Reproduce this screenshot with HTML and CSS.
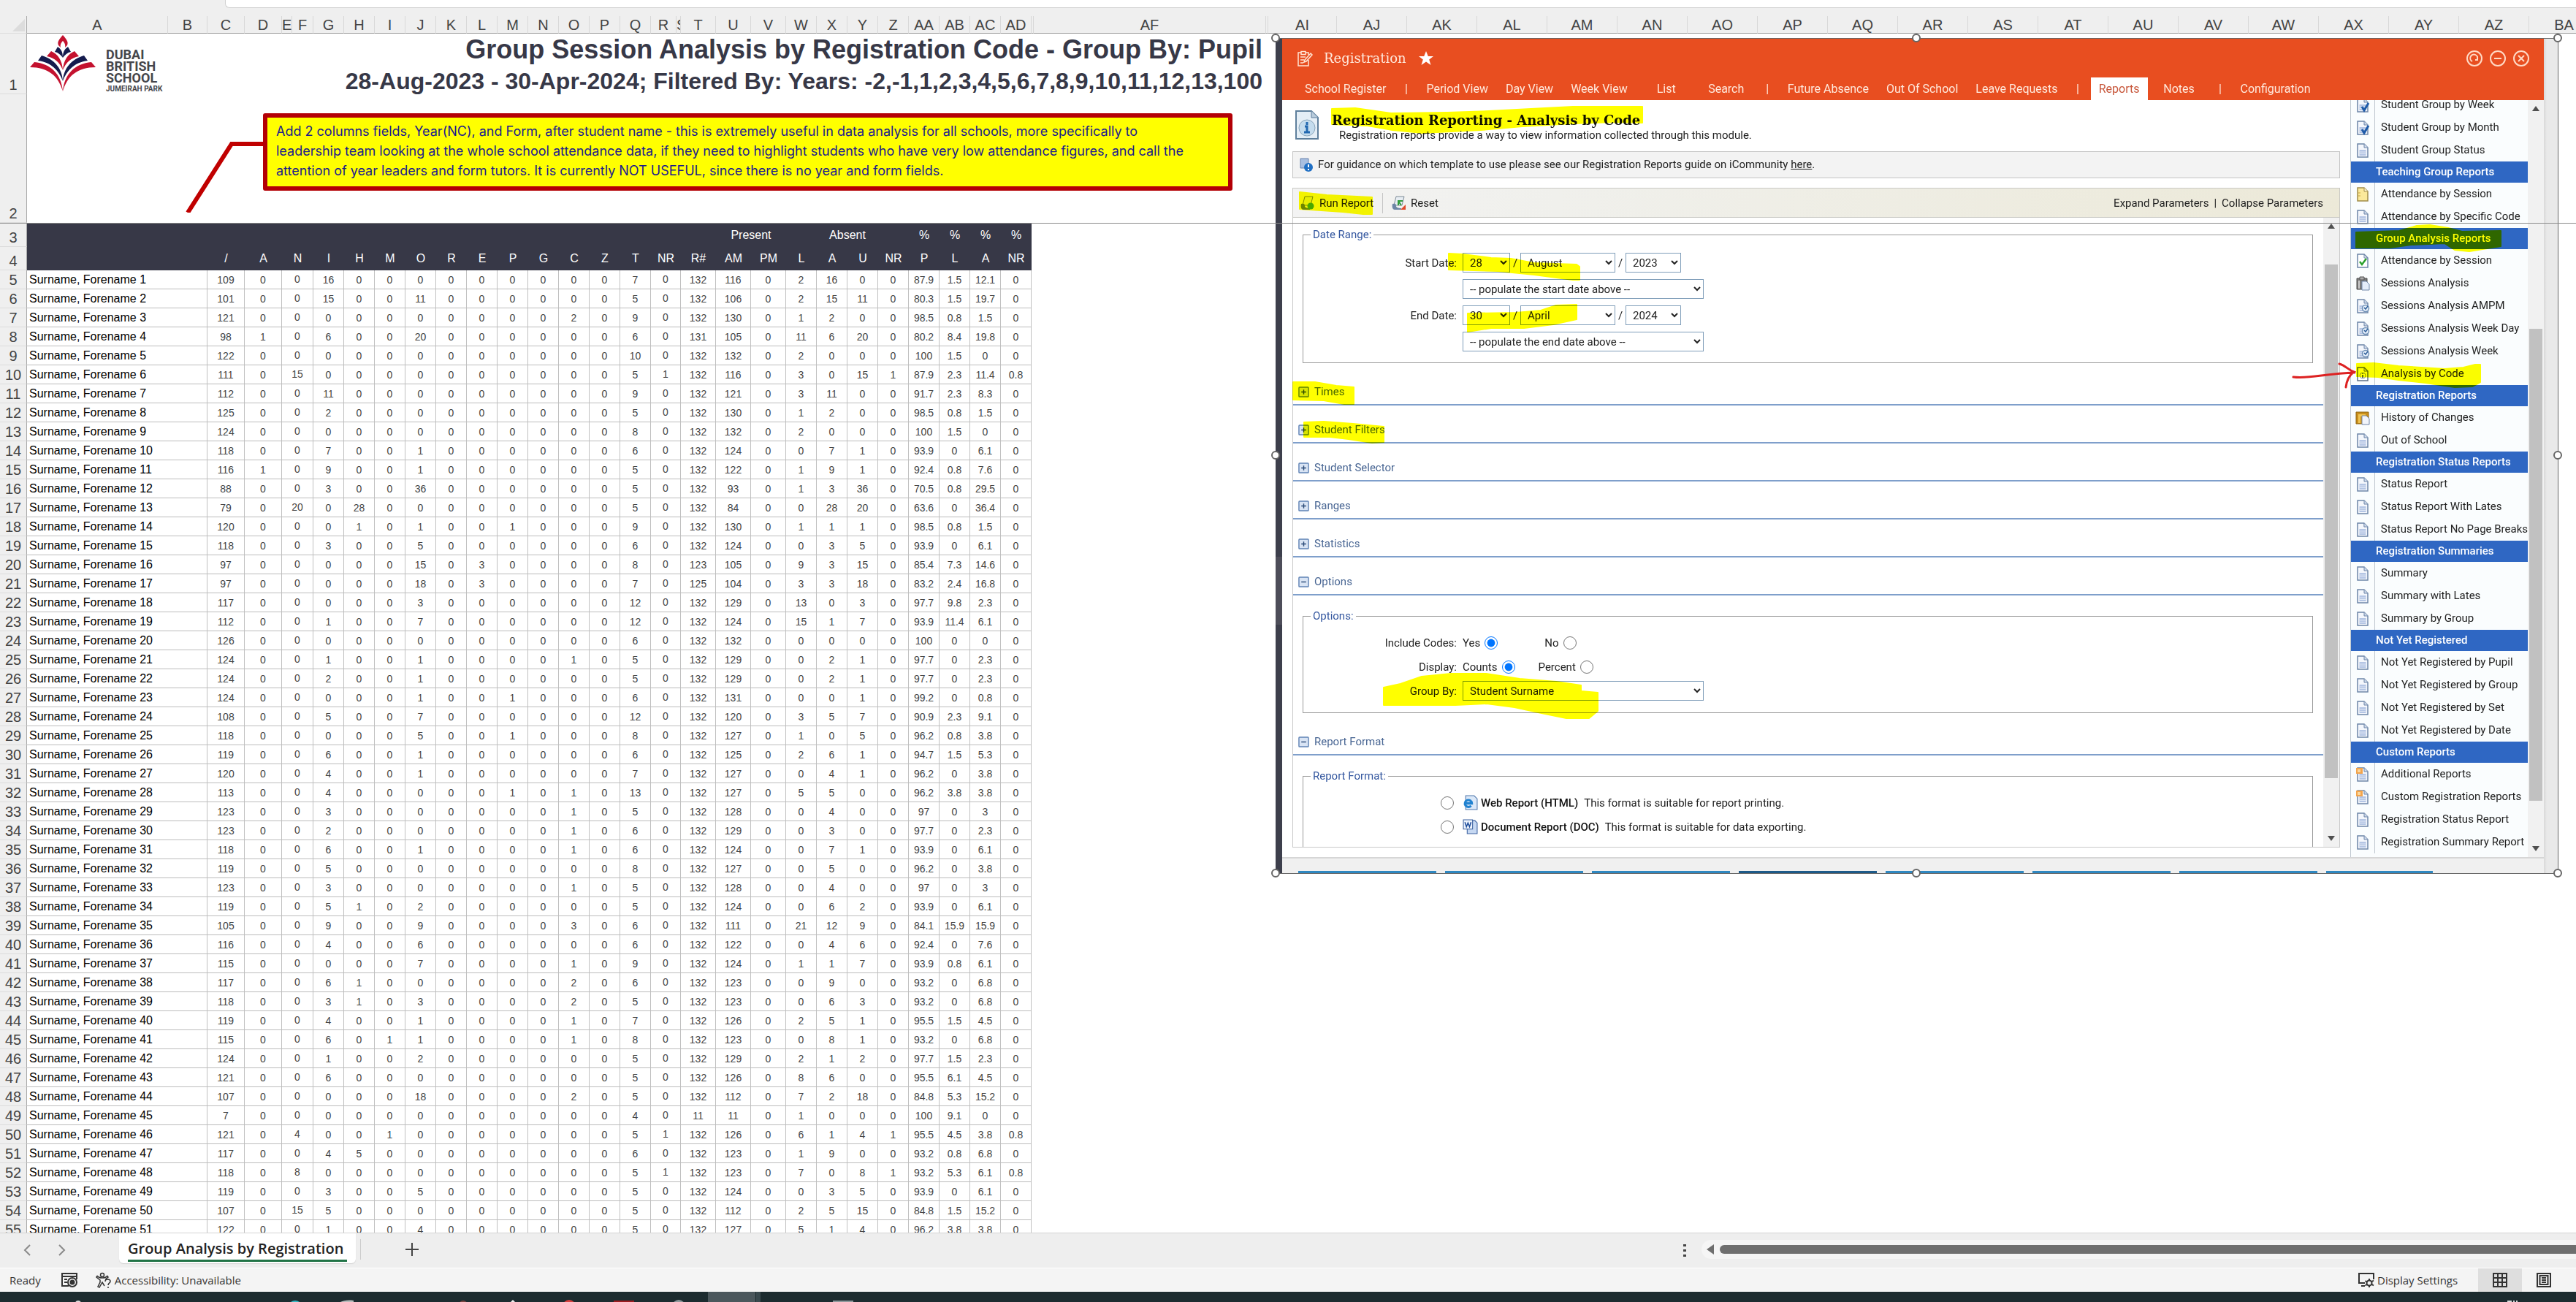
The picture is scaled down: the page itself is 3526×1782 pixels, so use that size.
FILE: index.html
```html
<!DOCTYPE html>
<html lang="en">
<head>
<meta charset="utf-8">
<title>Group Analysis by Registration</title>
<link rel="stylesheet" href="styles.css">
</head>
<body>
<svg class="symbols" aria-hidden="true">
  <symbol id="doc" viewBox="0 0 20 20"><path d="M3 1h9l5 5v13H3z" fill="#f4f7fc" stroke="#6e86a8" stroke-width="1.5"/><path d="M12 1v5h5" fill="#cfdbec" stroke="#6e86a8"/><path d="M5.500 9h9v8h-9z" fill="#b4c5e4"/><path d="M5.500 12h9M5.500 14.500h9" stroke="#dfe7f4"/></symbol>
  <symbol id="doc-check" viewBox="0 0 20 20"><use href="#doc"/><path d="M9 12l3 5 6-10" fill="none" stroke="#1f5ba8" stroke-width="3"/></symbol>
  <symbol id="doc-note" viewBox="0 0 20 20"><path d="M3 1h9l5 5v13H3z" fill="#fbe99b" stroke="#a08c4a" stroke-width="1.500"/><path d="M12 1v5h5" fill="#fff6cf" stroke="#a08c4a"/><path d="M4 8h3M4 12h3" stroke="#c9a43b"/></symbol>
  <symbol id="doc-tick" viewBox="0 0 20 20"><path d="M3 1h9l5 5v13H3z" fill="#fff" stroke="#6e86a8" stroke-width="1.500"/><path d="M12 1v5h5" fill="none" stroke="#6e86a8"/><path d="M6 11l3 4 6-8" fill="none" stroke="#2ba02b" stroke-width="2.500"/></symbol>
  <symbol id="clip" viewBox="0 0 20 20"><path d="M2 3h14v15H2z" fill="#7b7b7b" stroke="#4c4c4c"/><path d="M6 1h6v4H6z" fill="#aaa" stroke="#555"/><path d="M5 6v11" stroke="#ccc" stroke-width="2"/><path d="M9 7h6l4 4v8H9z" fill="#e4edfa" stroke="#6e86a8"/></symbol>
  <symbol id="doc-clock" viewBox="0 0 20 20"><use href="#doc"/><circle cx="14" cy="13" r="4.500" fill="#e8f1fb" stroke="#6d8fb5" stroke-width="1.500"/><path d="M12 12l2 2 3-4" fill="none" stroke="#2f5f9a" stroke-width="1.500"/></symbol>
  <symbol id="doc-info" viewBox="0 0 20 20"><path d="M3 1h9l5 5v13H3z" fill="#fff" stroke="#5c6f86" stroke-width="1.500"/><path d="M12 1v5h5" fill="none" stroke="#5c6f86"/><circle cx="10" cy="12" r="4" fill="none" stroke="#8a97a8"/><path d="M10 9v1M10 11v4" stroke="#5c6f86" stroke-width="2"/></symbol>
  <symbol id="book" viewBox="0 0 20 20"><path d="M1 2h17v16H1z" fill="#c98f1c" stroke="#8d6210"/><path d="M4 5h10v3H7v9H4z" fill="#f0c453"/><path d="M9 7h6l4 4v8H9z" fill="#f2f5fb" stroke="#7386a5"/></symbol>
  <symbol id="doc-new" viewBox="0 0 20 20"><use href="#doc"/><path d="M1 1h9v8H1z" fill="#f3a44c"/><path d="M3 3h4v4H3z" fill="#fbd79c"/></symbol>
  <symbol id="run" viewBox="0 0 20 20"><path d="M6 1h11l-3 12H3z" fill="#e7edf3" stroke="#7d8a96"/><path d="M1 11c4-1 5 0 5 3 0 2 3 3 7 3v2H4c-3 0-4-4-3-8z" fill="#6d86a5"/><circle cx="14" cy="14" r="4.500" fill="#49a82e"/></symbol>
  <symbol id="reset" viewBox="0 0 20 20"><path d="M6 1h11l-3 12H3z" fill="#e7edf3" stroke="#7d8a96"/><path d="M1 11c4-1 5 0 5 3 0 2 3 3 7 3v2H4c-3 0-4-4-3-8z" fill="#6d86a5"/><path d="M9 13V7h6M9 7l4 6" stroke="#2f9c3a" stroke-width="2" fill="none"/><path d="M19 12v7h-7z" fill="#e04a2a"/></symbol>
  <symbol id="plus" viewBox="0 0 16 16"><rect x="1" y="1" width="14" height="14" rx="1" fill="#d9e4f4" stroke="#5f83b5" stroke-width="1.500"/><path d="M4.500 8h7M8 4.500v7" stroke="#2b4a78" stroke-width="1.500"/></symbol>
  <symbol id="minus" viewBox="0 0 16 16"><rect x="1" y="1" width="14" height="14" rx="1" fill="#d9e4f4" stroke="#5f83b5" stroke-width="1.500"/><path d="M4.500 8h7" stroke="#2b4a78" stroke-width="1.500"/></symbol>
</svg>

<div class="window">
  <div class="formula-strip"><div class="formula-box"></div></div>

  <main class="sheet">
    <table class="grid" id="grid">
      <colgroup id="cols"></colgroup>
      <thead>
        <tr class="letters" id="letters"></tr>
      </thead>
      <tbody id="rows">
        <tr class="row-one">
          <th class="rownum" scope="row">1</th>
          <td colspan="2" class="logo-cell">
            <div class="logo">
              <svg class="logo-mark" viewBox="0 0 90 78" aria-hidden="true">
                <path d="M45 0c5 6 8 9 6 14l-3 3c1-4-1-7-3-9-2 2-4 5-3 9l-3-3c-2-5 1-8 6-14z" fill="#c4122f"/>
                <g id="fan">
                  <path d="M34 23l4-7c4 3 7 6 7 15-3-4-6-7-11-8z" fill="#141b4d"/>
                  <path d="M23 29l6-7c9 4 15 12 16 26-4-10-11-17-22-19z" fill="#c4122f"/>
                  <path d="M11 35l5-7c17 5 28 17 29 35-5-14-16-26-34-28z" fill="#141b4d"/>
                  <path d="M0 44l6-7c22 2 37 16 39 40-6-21-20-33-45-33z" fill="#c4122f"/>
                </g>
                <use href="#fan" transform="matrix(-1 0 0 1 90 0)"/>
              </svg>
              <div class="logo-text">DUBAI<br>BRITISH<br>SCHOOL<small>JUMEIRAH PARK</small></div>
            </div>
          </td>
          <td colspan="30" class="title-cell">
            <div class="title">Group Session Analysis by Registration Code - Group By: Pupil</div>
            <div class="subtitle">28-Aug-2023 - 30-Apr-2024; Filtered By: Years: -2,-1,1,2,3,4,5,6,7,8,9,10,11,12,13,100</div>
          </td>
        </tr>
        <tr class="row-two"><th class="rownum" scope="row">2</th></tr>
        <tr class="band row-three">
          <th class="rownum" scope="row">3</th>
          <td colspan="20"></td><td colspan="2">Present</td><td></td><td colspan="2">Absent</td><td></td>
          <td>%</td><td>%</td><td>%</td><td>%</td>
        </tr>
        <tr class="band row-four" id="codes"><th class="rownum" scope="row">4</th></tr>
      </tbody>
    </table>

    <svg class="leader" viewBox="0 0 110 100" aria-hidden="true"><path d="M6 96L66 2h44" transform="translate(0 4)" fill="none" stroke="#c00000" stroke-width="6"/></svg>
    <p class="callout">Add 2 columns fields, Year(NC), and Form, after student name - this is extremely useful in data analysis for all schools, more specifically to<br>leadership team looking at the whole school attendance data, if they need to highlight students who have very low attendance figures, and call the<br>attention of year leaders and form tutors. It is currently NOT USEFUL, since there is no year and form fields.</p>

    <section class="picture">
      <div class="edge-left"></div>
      <div class="app">
        <header class="app-head">
          <div class="app-title">
            <svg class="pad-icon" viewBox="0 0 24 24" fill="none" stroke="#ffe6d5" stroke-width="1.500"><path d="M17 14v8H3V4h4M13 4h4v3"/><path d="M7 2.500h6v4H7zM6 10h7M6 14h5M6 18h4"/><path d="M20 5l2 2-8 9-3 1 1-3z"/></svg>
            <h1>Registration</h1>
            <svg class="star" viewBox="0 0 20 20"><path d="M10 0l2.800 7H20l-5.800 4.500L16.500 19 10 14.500 3.500 19l2.300-7.500L0 7h7.200z" fill="#fff"/></svg>
            <div class="win-buttons">
              <button aria-label="Refresh"><svg viewBox="0 0 22 22"><circle cx="11" cy="11" r="10"/><path d="M8 15a5 5 0 1 1 7-3M15 8v5h-3"/></svg></button>
              <button aria-label="Minimise"><svg viewBox="0 0 22 22"><circle cx="11" cy="11" r="10"/><path d="M6 11h10"/></svg></button>
              <button aria-label="Close"><svg viewBox="0 0 22 22"><circle cx="11" cy="11" r="10"/><path d="M7 7l8 8M15 7l-8 8"/></svg></button>
            </div>
          </div>
          <nav class="tabs">
            <a href="#">School Register</a><span>|</span><a href="#">Period View</a><a href="#">Day View</a><a href="#">Week View</a><a href="#">List</a><a href="#">Search</a><span>|</span><a href="#">Future Absence</a><a href="#">Out Of School</a><a href="#">Leave Requests</a><span>|</span><a href="#" class="current">Reports</a><a href="#">Notes</a><span>|</span><a href="#">Configuration</a>
          </nav>
        </header>

        <div class="app-body">
          <div class="content">
            <div class="page-head">
              <svg class="info-icon" viewBox="0 0 32 40"><path d="M1 1h21l9 9v29H1z" fill="#e4eef6" stroke="#5e7f9c" stroke-width="2"/><path d="M22 1v9h9" fill="#b8cbdb" stroke="#5e7f9c"/><circle cx="16" cy="24" r="11" fill="#c4dcee" stroke="#8aa5ba"/><path d="M16 16v4M13 22h3v8M12 30h8" stroke="#2268b0" stroke-width="3" fill="none"/></svg>
              <div>
                <h2>Registration Reporting - Analysis by Code</h2>
                <p>Registration reports provide a way to view information collected through this module.</p>
              </div>
            </div>
            <div class="guidance">
              <svg class="icon" viewBox="0 0 20 20"><path d="M2 1h11v13H2z" fill="#a9bfe0" stroke="#6983ad"/><circle cx="13" cy="13" r="6" fill="#1f6fc4"/><path d="M13 9v4M13 15v2" stroke="#fff" stroke-width="2"/></svg>
              <span>For guidance on which template to use please see our Registration Reports guide on iCommunity <a href="#">here</a>.</span>
            </div>
            <div class="toolbar">
              <button><svg class="icon"><use href="#run"/></svg>Run Report</button>
              <i class="divider"></i>
              <button><svg class="icon"><use href="#reset"/></svg>Reset</button>
              <div class="toolbar-right"><a href="#">Expand Parameters</a><span>|</span><a href="#">Collapse Parameters</a></div>
            </div>
            <div class="params">
              <form class="form">
                <fieldset>
                  <legend>Date Range:</legend>
                  <div class="field"><label for="sd">Start Date:</label><select id="sd" class="w-day"><option>28</option></select><b>/</b><select aria-label="Start month" class="w-month"><option>August</option></select><b>/</b><select aria-label="Start year" class="w-year"><option>2023</option></select></div>
                  <div class="field"><label for="sp"></label><select id="sp" aria-label="Populate start" class="w-full"><option>-- populate the start date above --</option></select></div>
                  <div class="field"><label for="ed">End Date:</label><select id="ed" class="w-day"><option>30</option></select><b>/</b><select aria-label="End month" class="w-month"><option>April</option></select><b>/</b><select aria-label="End year" class="w-year"><option>2024</option></select></div>
                  <div class="field"><label for="ep"></label><select id="ep" aria-label="Populate end" class="w-full"><option>-- populate the end date above --</option></select></div>
                </fieldset>
                <div class="fold first"><svg><use href="#plus"/></svg>Times</div>
                <div class="fold"><svg><use href="#plus"/></svg>Student Filters</div>
                <div class="fold"><svg><use href="#plus"/></svg>Student Selector</div>
                <div class="fold"><svg><use href="#plus"/></svg>Ranges</div>
                <div class="fold"><svg><use href="#plus"/></svg>Statistics</div>
                <div class="fold"><svg><use href="#minus"/></svg>Options</div>
                <fieldset class="compact">
                  <legend>Options:</legend>
                  <div class="field"><span class="lead">Include Codes:</span><label class="choice">Yes<input type="radio" name="codes" checked></label><label class="choice second-a">No<input type="radio" name="codes"></label></div>
                  <div class="field"><span class="lead">Display:</span><label class="choice">Counts<input type="radio" name="display" checked></label><label class="choice second-b">Percent<input type="radio" name="display"></label></div>
                  <div class="field"><label for="gb">Group By:</label><select id="gb" class="w-full"><option>Student Surname</option></select></div>
                </fieldset>
                <div class="fold first"><svg><use href="#minus"/></svg>Report Format</div>
                <fieldset class="compact">
                  <legend>Report Format:</legend>
                  <div class="field format"><input type="radio" name="format" id="f1"><svg viewBox="0 0 20 20"><path d="M4 1h11l4 4v14H4z" fill="#dbe8f8" stroke="#4f76ac"/><path d="M3 11h9a4.500 4.500 0 1 0-1 3" fill="none" stroke="#2182d0" stroke-width="3"/></svg><label for="f1">Web Report (HTML)</label><span>This format is suitable for report printing.</span></div>
                  <div class="field format"><input type="radio" name="format" id="f2"><svg viewBox="0 0 20 20"><path d="M6 2h10l3 3v14H6z" fill="#c6d8f2" stroke="#3c62a0"/><path d="M1 1h12v12H1z" fill="#eef4fd" stroke="#3c62a0"/><path d="M3 4l2 6 2-5 2 5 2-6" fill="none" stroke="#1f4d9b" stroke-width="1.500"/></svg><label for="f2">Document Report (DOC)</label><span>This format is suitable for data exporting.</span></div>
                </fieldset>
              </form>
              <div class="scroll"><i class="up"></i><i class="thumb thumb-form"></i><i class="down"></i></div>
            </div>
          </div>

          <aside class="side">
            <ul>
              <li><svg><use href="#doc-check"/></svg><a href="#">Student Group by Week</a></li>
              <li><svg><use href="#doc-check"/></svg><a href="#">Student Group by Month</a></li>
              <li><svg><use href="#doc"/></svg><a href="#">Student Group Status</a></li>
              <li class="group">Teaching Group Reports</li>
              <li><svg><use href="#doc-note"/></svg><a href="#">Attendance by Session</a></li>
              <li><svg><use href="#doc"/></svg><a href="#">Attendance by Specific Code</a></li>
              <li class="group">Group Analysis Reports</li>
              <li><svg><use href="#doc-tick"/></svg><a href="#">Attendance by Session</a></li>
              <li><svg><use href="#clip"/></svg><a href="#">Sessions Analysis</a></li>
              <li><svg><use href="#doc-clock"/></svg><a href="#">Sessions Analysis AMPM</a></li>
              <li><svg><use href="#doc-clock"/></svg><a href="#">Sessions Analysis Week Day</a></li>
              <li><svg><use href="#doc-clock"/></svg><a href="#">Sessions Analysis Week</a></li>
              <li><svg><use href="#doc-info"/></svg><a href="#">Analysis by Code</a></li>
              <li class="group">Registration Reports</li>
              <li><svg><use href="#book"/></svg><a href="#">History of Changes</a></li>
              <li><svg><use href="#doc"/></svg><a href="#">Out of School</a></li>
              <li class="group">Registration Status Reports</li>
              <li><svg><use href="#doc"/></svg><a href="#">Status Report</a></li>
              <li><svg><use href="#doc"/></svg><a href="#">Status Report With Lates</a></li>
              <li><svg><use href="#doc"/></svg><a href="#">Status Report No Page Breaks</a></li>
              <li class="group">Registration Summaries</li>
              <li><svg><use href="#doc"/></svg><a href="#">Summary</a></li>
              <li><svg><use href="#doc"/></svg><a href="#">Summary with Lates</a></li>
              <li><svg><use href="#doc"/></svg><a href="#">Summary by Group</a></li>
              <li class="group">Not Yet Registered</li>
              <li><svg><use href="#doc"/></svg><a href="#">Not Yet Registered by Pupil</a></li>
              <li><svg><use href="#doc"/></svg><a href="#">Not Yet Registered by Group</a></li>
              <li><svg><use href="#doc"/></svg><a href="#">Not Yet Registered by Set</a></li>
              <li><svg><use href="#doc"/></svg><a href="#">Not Yet Registered by Date</a></li>
              <li class="group">Custom Reports</li>
              <li><svg><use href="#doc-new"/></svg><a href="#">Additional Reports</a></li>
              <li><svg><use href="#doc-new"/></svg><a href="#">Custom Registration Reports</a></li>
              <li><svg><use href="#doc"/></svg><a href="#">Registration Status Report</a></li>
              <li><svg><use href="#doc"/></svg><a href="#">Registration Summary Report</a></li>
            </ul>
            <div class="scroll"><i class="up"></i><i class="thumb thumb-side"></i><i class="down"></i></div>
          </aside>
        </div>
        <footer class="app-foot"><i></i><i></i><i></i><i class="dark"></i><i></i><i></i><i></i><i class="cut"></i></footer>
      </div>
      <div class="edge-right"></div>

      <svg class="marker" viewBox="1746 52 1755 1143" aria-hidden="true" fill="#ff0" stroke="#ff0" stroke-width="2" stroke-linejoin="round">
        <path d="M1823 149L1855 148 1904 155 1981 154 2038 152 2153 146 2248 146V168L2211 167 2153 169 2084 173 2027 178 1947 182 1906 178 1872 172 1823 170z"/>
        <path d="M1779 263L1816 267 1878 270V293L1866 293 1838 290 1779 286z"/>
        <path d="M1983 347L2002 348 2041 353 2068 354 2100 360 2158 362 2162 365V383L2153 383 2100 376 2050 371 1983 369z"/>
        <path d="M2009 429L2075 428 2109 425 2130 418 2158 417V437L2126 444 2086 449 2041 449 2009 454z"/>
        <path d="M1770 523L1800 523 1829 528 1853 530V553L1840 553 1812 548 1770 547z"/>
        <path d="M1785 578L1812 577 1852 580 1894 584V605L1878 606 1846 601 1820 598 1785 598z"/>
        <path d="M1894 941L1917 936 1946 926 1986 922 2034 922 2080 929 2130 933 2164 938V946L2187 948V973L2175 983 2144 983 2110 976 2073 968 2035 963 1992 965 1894 965z"/>
        <path d="M3225 318L3284 316 3308 309 3326 308 3351 312 3370 317 3423 316V337L3392 342 3380 344 3360 342 3346 333 3300 335 3272 339 3225 339z"/>
        <path d="M3226 498L3249 497 3283 501 3346 505 3372 503 3388 499 3395 499V523L3384 529 3360 530 3320 524 3283 520 3255 516 3226 515z"/>
      </svg>
      <svg class="handles" viewBox="1740 46 1767 1155" aria-hidden="true">
        <path d="M3139 516c22 3 44-5 84-6M3202 498c8 2 12 8 20 11-7 5-10 12-11 21" fill="none" stroke="#d22" stroke-width="3" stroke-linecap="round"/>
        <path d="M1746 52.500H3501.500V1195.500H1746" fill="none" stroke="#666"/>
        <g fill="#fff" stroke="#666" stroke-width="2"><circle cx="1746" cy="52" r="5"/><circle cx="2623" cy="52" r="5"/><circle cx="3501" cy="52" r="5"/><circle cx="1746" cy="623" r="5"/><circle cx="3501" cy="623" r="5"/><circle cx="1746" cy="1195" r="5"/><circle cx="2623" cy="1195" r="5"/><circle cx="3501" cy="1195" r="5"/></g>
      </svg>
    </section>
    <div class="freeze"></div>
  </main>

  <div class="sheet-bar">
    <button class="step" aria-label="Previous sheet"><svg viewBox="0 0 10 16"><path d="M9 1L2 8l7 7"/></svg></button>
    <button class="step" aria-label="Next sheet"><svg viewBox="0 0 10 16"><path d="M1 1l7 7-7 7"/></svg></button>
    <button class="sheet-tab"><span>Group Analysis by Registration</span></button>
    <i class="tab-split"></i>
    <button class="add" aria-label="New sheet"><svg viewBox="0 0 18 18"><path d="M9 0v18M0 9h18"/></svg></button>
    <div class="hscroll-area">
      <svg class="dots" viewBox="0 0 4 18"><path d="M0 0h4v3H0zM0 7h4v3H0zM0 14h4v3H0z" fill="#444"/></svg>
      <div class="hscroll"><svg viewBox="0 0 10 14"><path d="M10 0v14L0 7z" fill="#6f6f6f"/></svg><i></i></div>
    </div>
  </div>

  <footer class="status">
    <span>Ready</span>
    <svg class="rec" viewBox="0 0 22 20" fill="none" stroke="#333" stroke-width="2"><path d="M10 18H1V1h20v8M1 5h20M4 9h4M4 13h4"/><circle cx="15" cy="13" r="6" fill="#f4f4f4"/><circle cx="15" cy="13" r="2.500" fill="#333"/></svg>
    <svg class="acc" viewBox="0 0 22 22" fill="none" stroke="#333" stroke-width="1.500"><circle cx="9" cy="4" r="2.500"/><path d="M2 5c2 3 5 3 7 3s5 0 7-3M2 5l-1 2 5 4v3l-3 6 2 1 4-7 3 5M16 5l1 2-4 3M13 13c0-4 7-4 7 0 0 2-3 2-3 5M17 20v2"/></svg>
    <span>Accessibility: Unavailable</span>
    <div class="status-right">
      <svg class="rec" viewBox="0 0 22 20" fill="none" stroke="#333" stroke-width="2"><path d="M9 14H1V1h20v8M4 18h5"/><circle cx="15" cy="14" r="3.500"/><path d="M15 8v3M15 17v3M9.500 11l3 2M18 15.500l3 2M9.500 17.500l3-2M18 12.500l3-2"/></svg>
      <span>Display Settings</span>
      <button class="view on" aria-label="Normal view"><svg viewBox="0 0 20 20"><path d="M1 1h18v18H1zM1 7h18M1 13h18M7 1v18M13 1v18"/></svg></button>
      <button class="view" aria-label="Page layout view"><svg viewBox="0 0 20 20"><path d="M1 1h18v18H1zM4.500 4h11v12h-11zM7 7h6M7 10h6M7 13h6"/></svg></button>
    </div>
  </footer>

  <svg class="taskbar" viewBox="0 0 3526 14" preserveAspectRatio="xMinYMin slice" aria-hidden="true">
    <path d="M0 0h3526v14H0z" fill="#1c2b2f"/><path d="M969 0h65v14h-65z" fill="#4b575c"/><path d="M1035 0h6v14h-6z" fill="#39484d"/>
    <circle cx="404" cy="22" r="10" fill="#35b8c4"/><circle cx="107" cy="16" r="4" fill="#ddd"/><path d="M466 14c4-2 10-3 18-2v2z" fill="#b8bcbc"/><circle cx="634" cy="18" r="6" fill="#7a4440"/><path d="M699 14l3-3 3 3z" fill="#eee"/><circle cx="779" cy="20" r="9" fill="#d8413f"/><path d="M840 12h28v2h-28z" fill="#9b1c20"/><circle cx="929" cy="20" r="9" fill="#8f999c"/><path d="M1140 12h28v2h-28z" fill="#8f999c"/><path d="M3432 12h6v2h-6zM3440 12h2v2h-2zM3444 12h2v2h-2z" fill="#d8dcdc"/>
  </svg>
</div>
<script src="script.js"></script>
</body>
</html>
```
FILE: styles.css
```css
* { box-sizing: border-box; }
body { margin: 0; font-family: "Liberation Sans", Arial, sans-serif; background: #efefef; }
button { border: 0; background: none; padding: 0; margin: 0; font: inherit; color: inherit; }
.symbols { position: absolute; width: 0; height: 0; }
.window { display: flex; flex-direction: column; height: 100vh; overflow: hidden; }

.formula-strip { flex: 0 0 22px; background: #efefef; }
.formula-box { height: 11px; margin-left: 308px; background: #fff; border: 1px solid #d0d0d0; border-width: 0 0 1px 1px; border-bottom-left-radius: 6px; }

/* spreadsheet */
.sheet { position: relative; flex: 1; min-height: 0; overflow: hidden; background: #fff; }
.grid { table-layout: fixed; width: 100%; border-spacing: 0; border-collapse: separate; }
.grid th, .grid td { padding: 0; font-weight: normal; white-space: nowrap; }
.letters { height: 24px; }
.letters th { background: #efefef; border-bottom: 1px solid #999; border-right: 1px solid #d8d8d8; font-size: 20px; line-height: 22px; color: #444; overflow: hidden; }
.corner svg { display: block; width: 17px; height: 17px; margin: 2px 2px 2px auto; }
.grid .rownum { background: #efefef; border-right: 1px solid #a8a8a8; border-bottom: 1px solid #dcdcdc; font-size: 20px; line-height: 23px; color: #444; vertical-align: bottom; text-align: center; }
.row-one { height: 83px; }
.row-two { height: 176px; }
.row-three { height: 33px; }
.row-four { height: 32px; }
.grid .logo-cell, .grid .title-cell { vertical-align: top; }
.logo { display: flex; gap: 14px; padding: 2px 0 0 4px; height: 83px; }
.logo-mark { width: 90px; height: 78px; }
.logo-text { padding-top: 19px; font: 700 18px/16px Roboto, sans-serif; color: #46464b; }
.logo-text small { display: block; font-size: 10px; line-height: 14px; }
.grid .title-cell { padding-right: 5px; font-weight: bold; text-align: right; color: #373847; }
.title { font-size: 36px; line-height: 44px; }
.subtitle { margin-top: 3px; font-size: 32px; line-height: 36px; }
.band td { background: #373847; color: #fff; font-size: 16px; text-align: center; }
.data { height: 26px; }
.data td { border-right: 1px solid #c0c0c0; border-bottom: 1px solid #bcbcbc; font-size: 14px; line-height: 16px; text-align: center; color: #444; }
.data td.name { padding-left: 3px; text-align: left; font-size: 16px; color: #000; }
.data td.merged { padding-bottom: 2px; }

.freeze { position: absolute; left: 0; right: 0; top: 283px; height: 1px; background: #8a8a8a; }
.leader { position: absolute; left: 251px; top: 169px; width: 110px; height: 100px; }
.callout { position: absolute; left: 360px; top: 133px; width: 1327px; height: 106px; margin: 0; padding: 5px 12px; background: #ff0; border: 6px solid #b30006; border-radius: 3px; font: 18px/27px Inter, sans-serif; color: #1b1b8c; white-space: nowrap; }

/* embedded picture */
.picture { position: absolute; left: 1746px; top: 30px; width: 1755px; height: 1143px; display: flex; isolation: isolate; font-family: Roboto, sans-serif; font-size: 15px; line-height: 20px; color: #222; background: #fff; }
.edge-left { flex: 0 0 9px; background: linear-gradient(#3d3f4c 710px, #4d4d59 710px, #4d4d59 803px, #3d3f4c 803px); }
.edge-right { flex: 0 0 19px; background: linear-gradient(90deg, #d8d8d8, #e9e9e9 4px); }
.app { flex: 1; min-width: 0; display: flex; flex-direction: column; }
.app-head { flex: 0 0 85px; display: flex; flex-direction: column; justify-content: space-between; background: #e84e20; color: #ffe9dc; }
.app-title { display: flex; align-items: center; padding: 14px 20px 0 19px; height: 41px; }
.app-title h1 { margin: 0 17px 0 14px; font: 18px/24px "DejaVu Serif", serif; }
.pad-icon { width: 24px; height: 24px; }
.star { width: 20px; height: 20px; }
.win-buttons { margin-left: auto; display: flex; gap: 10px; }
.win-buttons svg { display: block; width: 22px; height: 22px; fill: none; stroke: #ffd9c4; stroke-width: 2; }
.tabs { display: flex; padding-left: 19px; font-size: 16px; line-height: 31px; }
.tabs a { min-width: 82px; padding: 0 12px; text-align: center; color: #ffe9dc; text-decoration: none; }
.tabs span { flex: 0 0 31px; text-align: center; }
.tabs .current { min-width: 78px; margin: 0 2px; padding: 0 11px; background: #fff; color: #c8583c; }
.app-body { flex: 1; min-height: 0; display: flex; }
.content { flex: 1; min-width: 0; padding: 0 14px 13px; display: flex; flex-direction: column; }
.page-head { flex: 0 0 70px; display: flex; gap: 18px; padding: 14px 0 0 4px; }
.page-head h2 { margin: 0; font: 700 18px/28px "DejaVu Serif", serif; color: #111; }
.page-head p { margin: 0; padding-left: 10px; line-height: 12px; }
.info-icon { width: 32px; height: 40px; }
.guidance { flex: 0 0 37px; display: flex; align-items: center; gap: 6px; padding-left: 8px; border: 1px solid #c4c4c4; background: #f3f3f3; margin-bottom: 13px; }
.guidance span { padding-bottom: 2px; }
.icon { width: 20px; height: 20px; }
a { color: inherit; }
.toolbar { flex: 0 0 41px; display: flex; align-items: center; padding: 0 22px 0 10px; border: 1px solid #c9c9c4; background: linear-gradient(90deg, #f3f3f3, #f0f0ec 25%, #ece9d8); }
.toolbar button { display: flex; align-items: center; gap: 6px; }
.toolbar .divider { width: 1px; height: 28px; margin: 0 12px; background: #c4c4c4; }
.toolbar-right { margin-left: auto; display: flex; gap: 7px; }
.toolbar-right a { text-decoration: none; }
.params { flex: 1; min-height: 0; overflow: hidden; display: flex; border: 1px solid #c9c9c9; border-top: 0; }
.form { flex: 1; min-width: 0; }
fieldset { margin: 13px 14px 0 13px; padding: 15px 0; border: 1px solid #999; display: grid; gap: 9px; min-width: 0; }
fieldset.compact { margin-top: 18px; padding: 13px 0 16px; gap: 6px; }
legend { margin-left: 10px; padding: 0 3px; color: #34579f; }
.field { display: flex; align-items: center; height: 27px; }
.field > label:first-child, .lead { width: 210px; margin-right: 8px; text-align: right; }
.field b { width: 14px; text-align: center; font-weight: normal; }
select { height: 27px; padding: 0 5px; border: 1px solid #7f9db9; border-radius: 0; background: #fff; font: 15px Roboto, sans-serif; color: #222; }
.w-day { width: 65px; }
.w-month { width: 130px; }
.w-year { width: 76px; }
.w-full { width: 330px; }
.choice { display: flex; align-items: center; gap: 6px; }
input[type=radio] { width: 18px; height: 18px; margin: 0; }
.second-a { margin-left: 64px; }
.second-b { margin-left: 32px; }
.format input { margin-left: 188px; }
.format svg { width: 21px; height: 21px; margin: 0 4px 0 12px; }
.format label { font-weight: 500; color: #111; }
.format span { margin-left: 8px; }
.fold { display: flex; align-items: flex-end; gap: 7px; height: 52px; padding: 0 0 7px 7px; border-bottom: 2px solid #7f9fcb; color: #4a6794; }
.fold.first { margin-top: 6px; }
.fold svg { width: 15px; height: 15px; margin-bottom: 2px; }

.scroll { flex: 0 0 22px; display: flex; flex-direction: column; align-items: center; background: #f1f1f1; }
.up, .down { flex: none; width: 0; border: 5px solid transparent; }
.up { margin-top: 3px; border-bottom: 7px solid #505050; }
.down { margin-top: auto; margin-bottom: 8px; border-top: 7px solid #505050; border-bottom: 0; }
.thumb { width: 18px; background: #c1c1c1; }
.thumb-form { margin-top: 49px; height: 703px; }
.thumb-side { margin-top: 298px; height: 646px; }

.side { flex: 0 0 265px; display: flex; overflow: hidden; border-left: 1px solid #c0c8d0; }
.side ul { flex: 1; min-width: 0; list-style: none; margin: -9px 0 0; padding: 0; background: #fafdfe; }
.side li { display: flex; align-items: center; height: 31px; }
.side li svg { width: 20px; height: 20px; margin: 0 6px; }
.side li a { flex: 1; padding-left: 8px; border-left: 1px solid #c0c8d0; line-height: 31px; text-decoration: none; white-space: nowrap; }
.side .group { height: 29px; padding: 0 0 2px 34px; background: #2f67c3; color: #fff; font-weight: 500; }
.app-foot { flex: 0 0 22px; display: flex; align-items: flex-end; gap: 12px; padding-left: 22px; background: #f0f0f0; border-top: 2px solid #d6d6d6; overflow: hidden; }
.app-foot i { flex: 0 0 189px; height: 3px; background: #2f87c0; }
.app-foot .dark { background: #1d5a88; }
.app-foot .cut { flex-basis: 146px; }
.marker { position: absolute; left: 0; top: 0; width: 1755px; height: 1143px; mix-blend-mode: multiply; pointer-events: none; }
.handles { position: absolute; left: -6px; top: -6px; width: 1767px; height: 1155px; pointer-events: none; }

/* bottom bars */
.sheet-bar { flex: 0 0 48px; display: flex; align-items: flex-start; padding-left: 32px; border-top: 1px solid #d4d4d4; background: #eee; }
.step { margin: 15px 38px 0 0; }
.step svg { display: block; width: 10px; height: 16px; fill: none; stroke: #8a8a8a; stroke-width: 2; }
.sheet-tab { width: 324px; height: 41px; margin-left: 35px; padding: 3px 12px 0; background: #fff; border-radius: 0 0 6px 6px; font: 600 20px/30px "Open Sans", sans-serif; color: #222; white-space: nowrap; text-align: left; box-shadow: 0 1px 1px #d0d0d0; }
.sheet-tab span { display: block; border-bottom: 3px solid #217346; }
.tab-split { width: 1px; height: 28px; margin: 8px 61px 0 6px; background: #ccc; }
.add { margin-top: 13px; }
.add svg { display: block; width: 18px; height: 18px; stroke: #444; stroke-width: 2; }
.hscroll-area { width: 1222px; margin-left: auto; display: flex; gap: 21px; }
.dots { width: 4px; height: 18px; margin-top: 15px; }
.hscroll { flex: 1; display: flex; align-items: center; gap: 8px; height: 26px; margin-top: 9px; padding-left: 7px; border-radius: 13px 0 0 13px; background: #f5f5f5; }
.hscroll svg { width: 10px; height: 14px; }
.hscroll i { flex: 1; height: 12px; border-radius: 6px 0 0 6px; background: #6f6f6f; }
.status { flex: 0 0 33px; display: flex; align-items: center; padding-left: 13px; border-top: 1px solid #fff; background: #f4f4f4; font: 15px/20px "Open Sans", sans-serif; color: #333; }
.rec { width: 22px; height: 20px; margin-left: 28px; }
.acc { width: 22px; height: 22px; margin: 0 4px 0 25px; }
.status-right { margin-left: auto; display: flex; align-items: center; }
.status-right .rec { margin: 0 4px 0 0; }
.status-right span { width: 138px; }
.view { display: flex; align-items: center; justify-content: center; width: 60px; height: 32px; }
.view.on { background: #dedede; }
.view svg { width: 20px; height: 20px; fill: none; stroke: #333; stroke-width: 2; }
.view:last-child { margin-right: 14px; }
.taskbar { flex: 0 0 14px; display: block; width: 100%; height: 14px; }
```
FILE: script.js
```js
const widths = [37, 193, 54, 51, 51, 14, 29, 42, 42, 42, 42, 42, 42, 42, 42, 42, 42, 42, 35, 6, 48, 48, 48, 42, 42, 42, 42, 42, 42, 42, 42, 3, 318, 3, 94];
const letters = ["A","B","C","D","E","F","G","H","I","J","K","L","M","N","O","P","Q","R","S","T","U","V","W","X","Y","Z","AA","AB","AC","AD","","AF","",
  "AI","AJ","AK","AL","AM","AN","AO","AP","AQ","AR","AS","AT","AU","AV","AW","AX","AY","AZ","BA"];
while (widths.length < letters.length + 1) widths.push(96);

const codes = "/ A N I H M O R E P G C Z T NR R# AM PM L A U NR P L A NR".split(" ");

// one line for each pupil, in the order of the code columns
const pupils = `
109 0 0 16 0 0 0 0 0 0 0 0 0 7 0 132 116 0 2 16 0 0 87.9 1.5 12.1 0
101 0 0 15 0 0 11 0 0 0 0 0 0 5 0 132 106 0 2 15 11 0 80.3 1.5 19.7 0
121 0 0 0 0 0 0 0 0 0 0 2 0 9 0 132 130 0 1 2 0 0 98.5 0.8 1.5 0
98 1 0 6 0 0 20 0 0 0 0 0 0 6 0 131 105 0 11 6 20 0 80.2 8.4 19.8 0
122 0 0 0 0 0 0 0 0 0 0 0 0 10 0 132 132 0 2 0 0 0 100 1.5 0 0
111 0 15 0 0 0 0 0 0 0 0 0 0 5 1 132 116 0 3 0 15 1 87.9 2.3 11.4 0.8
112 0 0 11 0 0 0 0 0 0 0 0 0 9 0 132 121 0 3 11 0 0 91.7 2.3 8.3 0
125 0 0 2 0 0 0 0 0 0 0 0 0 5 0 132 130 0 1 2 0 0 98.5 0.8 1.5 0
124 0 0 0 0 0 0 0 0 0 0 0 0 8 0 132 132 0 2 0 0 0 100 1.5 0 0
118 0 0 7 0 0 1 0 0 0 0 0 0 6 0 132 124 0 0 7 1 0 93.9 0 6.1 0
116 1 0 9 0 0 1 0 0 0 0 0 0 5 0 132 122 0 1 9 1 0 92.4 0.8 7.6 0
88 0 0 3 0 0 36 0 0 0 0 0 0 5 0 132 93 0 1 3 36 0 70.5 0.8 29.5 0
79 0 20 0 28 0 0 0 0 0 0 0 0 5 0 132 84 0 0 28 20 0 63.6 0 36.4 0
120 0 0 0 1 0 1 0 0 1 0 0 0 9 0 132 130 0 1 1 1 0 98.5 0.8 1.5 0
118 0 0 3 0 0 5 0 0 0 0 0 0 6 0 132 124 0 0 3 5 0 93.9 0 6.1 0
97 0 0 0 0 0 15 0 3 0 0 0 0 8 0 123 105 0 9 3 15 0 85.4 7.3 14.6 0
97 0 0 0 0 0 18 0 3 0 0 0 0 7 0 125 104 0 3 3 18 0 83.2 2.4 16.8 0
117 0 0 0 0 0 3 0 0 0 0 0 0 12 0 132 129 0 13 0 3 0 97.7 9.8 2.3 0
112 0 0 1 0 0 7 0 0 0 0 0 0 12 0 132 124 0 15 1 7 0 93.9 11.4 6.1 0
126 0 0 0 0 0 0 0 0 0 0 0 0 6 0 132 132 0 0 0 0 0 100 0 0 0
124 0 0 1 0 0 1 0 0 0 0 1 0 5 0 132 129 0 0 2 1 0 97.7 0 2.3 0
124 0 0 2 0 0 1 0 0 0 0 0 0 5 0 132 129 0 0 2 1 0 97.7 0 2.3 0
124 0 0 0 0 0 1 0 0 1 0 0 0 6 0 132 131 0 0 0 1 0 99.2 0 0.8 0
108 0 0 5 0 0 7 0 0 0 0 0 0 12 0 132 120 0 3 5 7 0 90.9 2.3 9.1 0
118 0 0 0 0 0 5 0 0 1 0 0 0 8 0 132 127 0 1 0 5 0 96.2 0.8 3.8 0
119 0 0 6 0 0 1 0 0 0 0 0 0 6 0 132 125 0 2 6 1 0 94.7 1.5 5.3 0
120 0 0 4 0 0 1 0 0 0 0 0 0 7 0 132 127 0 0 4 1 0 96.2 0 3.8 0
113 0 0 4 0 0 0 0 0 1 0 1 0 13 0 132 127 0 5 5 0 0 96.2 3.8 3.8 0
123 0 0 3 0 0 0 0 0 0 0 1 0 5 0 132 128 0 0 4 0 0 97 0 3 0
123 0 0 2 0 0 0 0 0 0 0 1 0 6 0 132 129 0 0 3 0 0 97.7 0 2.3 0
118 0 0 6 0 0 1 0 0 0 0 1 0 6 0 132 124 0 0 7 1 0 93.9 0 6.1 0
119 0 0 5 0 0 0 0 0 0 0 0 0 8 0 132 127 0 0 5 0 0 96.2 0 3.8 0
123 0 0 3 0 0 0 0 0 0 0 1 0 5 0 132 128 0 0 4 0 0 97 0 3 0
119 0 0 5 1 0 2 0 0 0 0 0 0 5 0 132 124 0 0 6 2 0 93.9 0 6.1 0
105 0 0 9 0 0 9 0 0 0 0 3 0 6 0 132 111 0 21 12 9 0 84.1 15.9 15.9 0
116 0 0 4 0 0 6 0 0 0 0 0 0 6 0 132 122 0 0 4 6 0 92.4 0 7.6 0
115 0 0 0 0 0 7 0 0 0 0 1 0 9 0 132 124 0 1 1 7 0 93.9 0.8 6.1 0
117 0 0 6 1 0 0 0 0 0 0 2 0 6 0 132 123 0 0 9 0 0 93.2 0 6.8 0
118 0 0 3 1 0 3 0 0 0 0 2 0 5 0 132 123 0 0 6 3 0 93.2 0 6.8 0
119 0 0 4 0 0 1 0 0 0 0 1 0 7 0 132 126 0 2 5 1 0 95.5 1.5 4.5 0
115 0 0 6 0 1 1 0 0 0 0 1 0 8 0 132 123 0 0 8 1 0 93.2 0 6.8 0
124 0 0 1 0 0 2 0 0 0 0 0 0 5 0 132 129 0 2 1 2 0 97.7 1.5 2.3 0
121 0 0 6 0 0 0 0 0 0 0 0 0 5 0 132 126 0 8 6 0 0 95.5 6.1 4.5 0
107 0 0 0 0 0 18 0 0 0 0 2 0 5 0 132 112 0 7 2 18 0 84.8 5.3 15.2 0
7 0 0 0 0 0 0 0 0 0 0 0 0 4 0 11 11 0 1 0 0 0 100 9.1 0 0
121 0 4 0 0 1 0 0 0 0 0 0 0 5 1 132 126 0 6 1 4 1 95.5 4.5 3.8 0.8
117 0 0 4 5 0 0 0 0 0 0 0 0 6 0 132 123 0 1 9 0 0 93.2 0.8 6.8 0
118 0 8 0 0 0 0 0 0 0 0 0 0 5 1 132 123 0 7 0 8 1 93.2 5.3 6.1 0.8
119 0 0 3 0 0 5 0 0 0 0 0 0 5 0 132 124 0 0 3 5 0 93.9 0 6.1 0
107 0 15 5 0 0 0 0 0 0 0 0 0 5 0 132 112 0 2 5 15 0 84.8 1.5 15.2 0
122 0 0 1 0 0 4 0 0 0 0 0 0 5 0 132 127 0 5 1 4 0 96.2 3.8 3.8 0
`.trim().split("\n").map(line => line.split(" "));

// the third and fifteenth codes each sit over two sheet columns
const cell = (v, i) => (i === 2 || i === 14) ? `<td colspan="2" class="merged">${v}</td>` : `<td>${v}</td>`;

document.getElementById("grid").style.width = widths.reduce((a, b) => a + b, 0) + "px";
document.getElementById("cols").innerHTML = widths.map(w => `<col style="width:${w}px">`).join("");
document.getElementById("letters").innerHTML =
  `<td class="rownum corner"><svg viewBox="0 0 17 17"><path d="M17 0v17H0z" fill="#dcdcdc"/></svg></td>` +
  letters.map(l => `<th scope="col">${l}</th>`).join("");
document.getElementById("codes").insertAdjacentHTML("beforeend", `<td colspan="2"></td>` + codes.map(cell).join(""));
document.getElementById("rows").insertAdjacentHTML("beforeend", pupils.map((p, i) =>
  `<tr class="data"><th class="rownum" scope="row">${i + 5}</th><td colspan="2" class="name">Surname, Forename ${i + 1}</td>${p.map(cell).join("")}</tr>`).join(""));
```
